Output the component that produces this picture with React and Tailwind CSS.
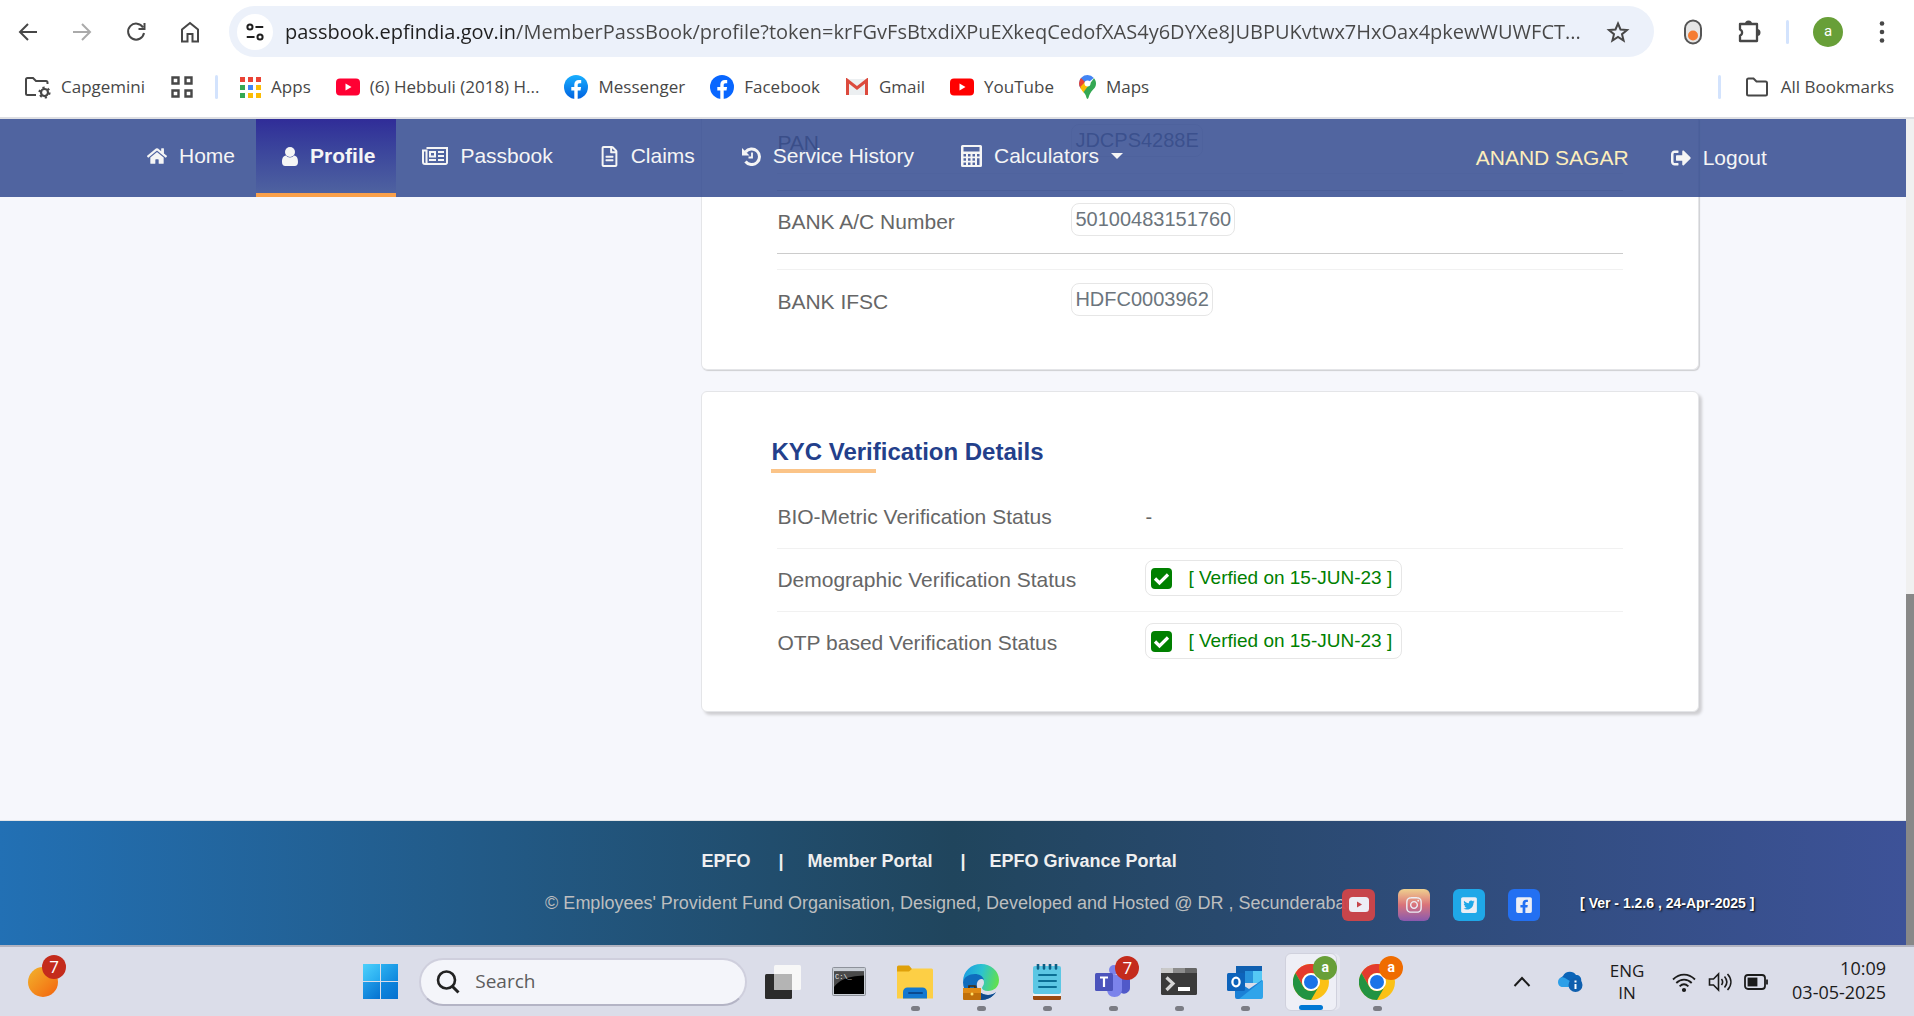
import { FaHome, FaRegFileAlt, FaSignOutAlt, FaInstagram, FaFacebookSquare, FaTwitterSquare } from "react-icons/fa";

const URL_TEXT =
  "passbook.epfindia.gov.in/MemberPassBook/profile?token=krFGvFsBtxdiXPuEXkeqCedofXAS4y6DYXe8JUBPUKvtwx7HxOax4pkewWUWFCT...";

/* ---------- browser toolbar icons ---------- */
function Line({ d, className = "size-6", w = 2, children }) {
  return (
    <svg viewBox="0 0 24 24" className={className} fill="none" stroke="currentColor" strokeWidth={w} aria-hidden="true">
      <path d={d} />
      {children}
    </svg>
  );
}
const YouTubeMark = ({ color }) => (
  <svg viewBox="0 0 24 18" className="w-6 h-[18px]" aria-hidden="true">
    <rect width="24" height="17" y="0.5" rx="4" fill={color} />
    <path d="M9.500 5.500v7l6-3.500z" fill="#fff" />
  </svg>
);
const FacebookMark = ({ from, to, id }) => (
  <svg viewBox="0 0 24 24" className="size-6" aria-hidden="true">
    <defs>
      <linearGradient id={id} x1="0" y1="0" x2="0" y2="1">
        <stop offset="0" stopColor={from} />
        <stop offset="1" stopColor={to} />
      </linearGradient>
    </defs>
    <circle cx="12" cy="12" r="12" fill={`url(#${id})`} />
    <path d="M10.300 24v-8.400H7.300V12h3V9.700c0-3.200 1.700-4.800 4.600-4.800.9 0 1.800.1 2.300.2v3.200h-1.600c-1.500 0-1.900.8-1.900 1.900V12h3.400l-.6 3.600h-2.800V24z" fill="#fff" />
  </svg>
);
const AppsMark = () => {
  const c = ["#ea4335", "#ea4335", "#ea4335", "#34a853", "#4285f4", "#fbbc04", "#34a853", "#fbbc04", "#fbbc04"];
  return (
    <svg viewBox="0 0 21 21" className="size-[21px]" aria-hidden="true">
      {c.map((f, i) => (
        <rect key={i} x={(i % 3) * 8} y={Math.floor(i / 3) * 8} width="5" height="5" fill={f} />
      ))}
    </svg>
  );
};
const GmailMark = () => (
  <svg viewBox="0 0 24 18" className="w-6 h-[18px]" aria-hidden="true">
    <rect x="1" y="1" width="22" height="16" rx="1.500" fill="#eceff1" />
    <path d="M2.500 17V2.500L12 10l9.500-7.500V17" fill="none" stroke="#dc4a3d" strokeWidth="3" />
  </svg>
);
const MapsMark = () => (
  <svg viewBox="0 0 17 24" className="w-[17px] h-6" aria-hidden="true">
    <path d="M8.500 0A8.500 8.500 0 0 0 0 8.500c0 2 .7 3.500 1.800 5L14.800 3A8.400 8.400 0 0 0 8.500 0z" fill="#4285f4" />
    <path d="M2 3 6 7 1.800 13.500A8.300 8.300 0 0 1 2 3z" fill="#ea4335" />
    <path d="M1.200 12 6 7l5 3.500-6.500 7.200C3.200 15.700 1.900 14.200 1.200 12z" fill="#fbbc04" />
    <path d="M15 3.200c1.300 1.500 2 3.300 2 5.300 0 5-4.200 6-6.600 11.500-.6 1.300-.9 4-1.900 4s-1.300-2.700-1.900-4l-2-2.900z" fill="#34a853" />
    <circle cx="8.500" cy="8.500" r="3" fill="#fff" />
  </svg>
);
const FolderGear = () => (
  <svg viewBox="0 0 27 24" className="w-[27px] h-6 text-[#474747]" fill="none" stroke="currentColor" strokeWidth="2" aria-hidden="true">
    <path d="M12 20H3.500A1.500 1.500 0 0 1 2 18.500v-14A1.500 1.500 0 0 1 3.500 3H9l3 3h10a1.500 1.500 0 0 1 1.500 1.500V9" />
    <circle cx="20.500" cy="17.500" r="3.500" strokeWidth="2.200" />
    <circle cx="20.500" cy="17.500" r="5" strokeWidth="2.200" strokeDasharray="2.200 3.030" />
  </svg>
);

const bookmarks = [
  { label: "Apps", icon: <AppsMark /> },
  { label: "(6) Hebbuli (2018) H...", icon: <YouTubeMark color="#ff0033" /> },
  { label: "Messenger", icon: <FacebookMark id="fbm" from="#19afff" to="#0062e0" /> },
  { label: "Facebook", icon: <FacebookMark id="fbf" from="#0866ff" to="#0866ff" /> },
  { label: "Gmail", icon: <GmailMark /> },
  { label: "YouTube", icon: <YouTubeMark color="#ff0000" /> },
  { label: "Maps", icon: <MapsMark /> },
];

function BrowserBar() {
  return (
    <header className="shrink-0 border-b-2 border-[#dedfe3] bg-white pb-[18px] text-[#474747]">
      <div className="flex items-center pt-[6px] pr-5 pl-4">
        <div className="flex items-center gap-[30px]">
          <button aria-label="Back"><Line d="M21 12H4M12 4l-8 8 8 8" /></button>
          <button aria-label="Forward" className="text-[#aaa]"><Line d="M3 12h17M12 4l8 8-8 8" /></button>
          <button aria-label="Reload"><Line d="M19 7.500A8 8 0 1 0 20 13M20.500 3v6h-6" /></button>
          <button aria-label="Home"><Line d="M4 21.500V9.500L12 3l8 6.500v12h-5.500V14h-5v7.500z" /></button>
        </div>
        <div className="ml-[27px] flex h-[51px] flex-1 items-center rounded-full bg-[#ecf1fa] pr-6 pl-2">
          <button aria-label="View site information" className="flex size-9 items-center justify-center rounded-full bg-white text-[#1f1f1f]">
            <Line d="M12.500 6.500H21M3 17.500h8.500" w={2.2} className="size-[22px]">
              <circle cx="6.500" cy="6.500" r="2.800" />
              <circle cx="17.500" cy="17.500" r="2.800" />
            </Line>
          </button>
          <input
            aria-label="Address"
            readOnly
            defaultValue={URL_TEXT}
            className="ml-3 min-w-0 flex-1 bg-transparent bg-linear-to-r from-[#1f1f1f] from-[229px] to-[#474747] to-[229px] bg-clip-text font-['Open_Sans',sans-serif] text-[20px] text-transparent outline-none"
          />
          <button aria-label="Bookmark this tab">
            <Line d="m12 3.500 2.500 6 6.500.5-5 4.200 1.600 6.300L12 17l-5.600 3.500L8 14.200 3 10l6.500-.5z" />
          </button>
        </div>
        <div className="flex items-center">
          <button aria-label="Capsule extension" className="ml-[29px]">
            <svg viewBox="0 0 20 26" className="h-[26px] w-5" aria-hidden="true">
              <rect x="2" y="1.500" width="16" height="23" rx="8" fill="#e6e6e6" stroke="#555" strokeWidth="2" />
              <circle cx="10" cy="16.500" r="5" fill="#f57c32" />
            </svg>
          </button>
          <button aria-label="Extensions" className="ml-[33px]">
            <svg viewBox="0 0 26 26" className="size-[26px]" aria-hidden="true">
              <path d="M4 5h17v17H4v-5.500a3.200 3.200 0 0 0 0-6z" fill="none" stroke="currentColor" strokeWidth="2.300" strokeLinejoin="round" />
              <path d="M9 5a3.500 3.500 0 0 1 7 0zM21 10a3.500 3.500 0 0 1 0 7z" fill="currentColor" />
            </svg>
          </button>
          <span className="ml-6 h-6 w-[3px] rounded bg-[#d3e3fd]" />
          <button aria-label="Account" className="ml-6 flex size-[30px] items-center justify-center rounded-full bg-[#689f38] font-[Roboto,sans-serif] text-[15px] text-white">a</button>
          <button aria-label="Menu" className="ml-[27px]">
            <svg viewBox="0 0 24 24" className="size-6" fill="currentColor" aria-hidden="true">
              <circle cx="12" cy="3.500" r="2.300" /><circle cx="12" cy="12" r="2.300" /><circle cx="12" cy="20.500" r="2.300" />
            </svg>
          </button>
        </div>
      </div>
      <nav aria-label="Bookmarks" className="mt-[18px] flex h-6 items-center pr-5 pl-6 font-['Open_Sans',sans-serif] text-[17px] whitespace-nowrap">
        <a href="#" className="flex items-center gap-[10px]"><FolderGear />Capgemini</a>
        <button aria-label="Tab groups" className="ml-[25px]">
          <Line d="M2.500 2.500h6v6h-6zM15.500 2.500h6v6h-6zM2.500 15.500h6v6h-6zM15.500 15.500h6v6h-6z" w={2.4} />
        </button>
        <span className="mr-[22px] ml-[21px] h-6 w-[3px] rounded bg-[#d3e3fd]" />
        <div className="flex items-center gap-[25px]">
          {bookmarks.map((b) => (
            <a key={b.label} href="#" className="flex items-center gap-[10px]">{b.icon}{b.label}</a>
          ))}
        </div>
        <span className="mr-6 ml-auto h-6 w-[3px] rounded bg-[#d3e3fd]" />
        <button className="flex items-center gap-3">
          <Line d="M2 19V5a1.500 1.500 0 0 1 1.500-1.500H8.500l3 3h9A1.500 1.500 0 0 1 22 8v11a1.500 1.500 0 0 1-1.500 1.500h-17A1.500 1.500 0 0 1 2 19z" />
          All Bookmarks
        </button>
      </nav>
    </header>
  );
}

/* ---------- portal ---------- */
const UserIcon = () => (
  <svg viewBox="0 0 16 19" className="h-[19px] w-4" fill="currentColor" aria-hidden="true">
    <circle cx="8" cy="5" r="5" />
    <path d="M4 8.500c1 1.300 2.300 2 4 2s3-.7 4-2c3 .4 4 3 4 6.500 0 2.500-1.200 4-3.200 4H3.200C1.200 19 0 17.500 0 15c0-3.500 1-6.100 4-6.500z" />
  </svg>
);
const NewsIcon = () => (
  <svg viewBox="0 0 26 18" className="h-[18px] w-[26px]" fill="none" stroke="currentColor" strokeWidth="2" aria-hidden="true">
    <path d="M4.500 1H25v14.500a1.500 1.500 0 0 1-1.500 1.500H3A2 2 0 0 1 1 15V3.500h3.500V15a1.500 1.500 0 0 1-1.500 2" />
    <path d="M8 5h5v4.500H8zM7 13h7M16 5h6M16 9h6M16 13h6" />
  </svg>
);
const HistoryIcon = () => (
  <svg viewBox="0 0 19 19" className="size-[19px]" fill="none" stroke="currentColor" aria-hidden="true">
    <path d="M3.500 5A7.800 7.800 0 1 1 3.500 14.500" strokeWidth="3" />
    <path d="M0 1v7.500h7.500z" fill="currentColor" stroke="none" />
    <path d="M10 5.500v5H6.500" strokeWidth="1.800" />
  </svg>
);
const CheckIcon = () => (
  <svg viewBox="0 0 21 21" className="size-[21px]" aria-hidden="true">
    <rect width="21" height="21" rx="4" fill="green" />
    <path d="m4 10.500 4.500 4.500L17 6.500" fill="none" stroke="#fff" strokeWidth="3.200" />
  </svg>
);
const CalcIcon = () => (
  <svg viewBox="0 0 21 22" className="h-[22px] w-[21px]" aria-hidden="true">
    <path fillRule="evenodd" fill="currentColor" d="M1.500 0h18A1.500 1.500 0 0 1 21 1.500v19a1.500 1.500 0 0 1-1.500 1.500h-18A1.500 1.500 0 0 1 0 20.500v-19A1.500 1.500 0 0 1 1.500 0zM2.500 2v4.500h16V2zM2.500 9v2.500H5V9zM7 9v2.500h2.500V9zM11.500 9v2.500H14V9zM16 9v2.500h2.500V9zM2.500 13.200v2.500H5v-2.500zM7 13.200v2.500h2.500v-2.500zM11.500 13.200v2.500H14v-2.500zM2.500 17.500V20H5v-2.500zM7 17.500V20h2.500v-2.500zM11.500 17.500V20H14v-2.500zM16 13.200V20h2.500v-6.800z" />
  </svg>
);

const tabs = [
  { label: "Home", icon: <FaHome className="size-5" /> },
  { label: "Profile", icon: <UserIcon />, active: true },
  { label: "Passbook", icon: <NewsIcon /> },
  { label: "Claims", icon: <FaRegFileAlt className="h-[21px] w-[19px]" /> },
  { label: "Service History", icon: <HistoryIcon /> },
  { label: "Calculators", icon: <CalcIcon />, menu: true },
];

function PortalNav() {
  return (
    <nav aria-label="Main" className="absolute inset-x-0 top-0 flex h-[78px] bg-[#334a8f]/85 pr-[7.3%] pl-[6.350%] text-[21px] whitespace-nowrap text-[#f5f5f5]">
      {tabs.map((t) => (
        <a
          key={t.label}
          href="#"
          className={
            "flex items-center gap-3 border-b-4 pr-[21px] pl-[26px] " +
            (t.active
              ? "border-[#faa049] bg-linear-to-b from-[#302c98] to-[#4f62a0] font-bold"
              : "border-transparent")
          }
        >
          {t.icon}
          {t.label}
          {t.menu && <span className="border-x-[6px] border-t-[6px] border-x-transparent border-t-current" />}
        </a>
      ))}
      <span className="ml-auto flex items-center text-[#fdeebb]">ANAND SAGAR</span>
      <a href="#" className="ml-[42px] flex items-center gap-3">
        <FaSignOutAlt className="size-5" />
        Logout
      </a>
    </nav>
  );
}

const pill = "rounded-lg border border-[#e6e6e6]";
const idRow = "flex items-center";
const idLabel = "mt-1 w-[294px] text-[21px] leading-6";
const idValue = "px-[3px] text-[20px] leading-[31px] text-[#6c757d] " + pill;

function KycStatus({ label, date }) {
  return (
    <div className="flex h-[63px] items-center border-t border-[#f1f1f1]">
      <dt className="w-[368px] text-[21px] leading-6">{label}</dt>
      <dd className={"mb-1 flex h-9 items-center gap-4 pr-[9px] pl-[5px] text-[19px] leading-[34px] text-[green] " + pill}>
        <CheckIcon />
        <span>{date}</span>
      </dd>
    </div>
  );
}

function Cards() {
  return (
    <main className="mr-[10.850%] ml-[36.800%] flex-1 text-[#666]">
      <section aria-label="Bank details" className="rounded-b-md border border-t-0 border-[#e4e5e8] bg-white pr-[75px] pb-[53px] pl-[75px] shadow-[1px_1px_1px_#cfcfd2]">
        <dl>
          <div className={idRow + " border-b border-[#f1f1f1] pt-[5px] pb-4"}>
            <dt className={idLabel}>PAN</dt>
            <dd className={idValue}>JDCPS4288E</dd>
          </div>
          <div className={idRow + " mt-4 border-t border-[#ccc] pt-3 pb-[17px]"}>
            <dt className={idLabel}>BANK A/C Number</dt>
            <dd className={idValue}>50100483151760</dd>
          </div>
          <div className="border-t border-[#ccc] pt-[15px]">
            <div className={idRow + " border-t border-[#f1f1f1] pt-[13px]"}>
              <dt className={idLabel}>BANK IFSC</dt>
              <dd className={idValue}>HDFC0003962</dd>
            </div>
          </div>
        </dl>
      </section>
      <section className="mt-[21px] rounded-md border border-[#e4e5e8] bg-white px-[75px] pt-[43px] pb-[37px] shadow-[3px_3px_3px_#cfcfd2]">
        <h2 className="-ml-[6px] text-[24px] leading-[33px] font-bold text-[#233f8b]">
          KYC Verification Details
          <span className="mt-px block h-1 w-[105px] bg-[#fbc488]" />
        </h2>
        <dl className="mt-3">
          <div className="flex h-[63px] items-center">
            <dt className="w-[368px] text-[21px] leading-6">BIO-Metric Verification Status</dt>
            <dd className="text-[20px] leading-6">-</dd>
          </div>
          <KycStatus label="Demographic Verification Status" date="[ Verfied on 15-JUN-23 ]" />
          <KycStatus label="OTP based Verification Status" date="[ Verfied on 15-JUN-23 ]" />
        </dl>
      </section>
    </main>
  );
}

const social = "flex h-8 items-center justify-center rounded-md";
function PortalFooter() {
  return (
    <footer className="shrink-0 border-t border-[#e3e5e8] bg-linear-to-r from-[#2270b4] via-[#20455d] to-[#3d5298] pt-7 pb-6 text-[18px]">
      <div className="ml-[36.800%] flex items-center leading-6 font-bold text-[#efefef]">
        <a href="#">EPFO</a>
        <span className="mr-6 ml-7">|</span>
        <a href="#">Member Portal</a>
        <span className="mr-6 ml-7">|</span>
        <a href="#">EPFO Grivance Portal</a>
      </div>
      <div className="mt-4 flex h-8 items-center pl-[28.600%]">
        <p className="mb-1 w-[797px] leading-6 whitespace-nowrap text-[#bdbebf]">
          © Employees' Provident Fund Organisation, Designed, Developed and Hosted @ DR , Secunderabad
        </p>
        <div className="relative flex items-center gap-[23px] text-[#eceef5]">
          <a href="#" aria-label="YouTube" className={social + " w-[33px] bg-[#d04549]/95"}>
            <svg viewBox="0 0 20 16" className="h-4 w-5" aria-hidden="true">
              <rect width="20" height="15" rx="3.500" fill="currentColor" />
              <path d="M8 4.500v6l5-3z" fill="#c5454a" />
            </svg>
          </a>
          <a href="#" aria-label="Instagram" className={social + " w-8 bg-linear-to-b from-[#eed08e] via-[#d9727a] to-[#8a58ad]"}><FaInstagram className="size-[18px]" /></a>
          <a href="#" aria-label="Twitter" className={social + " w-8 bg-[#1fa8e8]"}><FaTwitterSquare className="size-[18px]" /></a>
          <a href="#" aria-label="Facebook" className={social + " w-8 bg-[#2370f2]"}><FaFacebookSquare className="size-[18px]" /></a>
        </div>
        <span className="mb-1 ml-10 text-[14px] font-bold whitespace-nowrap text-white text-shadow-[1px_1px_2px_#000]">[ Ver - 1.2.6 , 24-Apr-2025 ]</span>
      </div>
    </footer>
  );
}

/* ---------- taskbar ---------- */
const TaskView = () => (
  <svg viewBox="0 0 36 36" className="size-9" aria-hidden="true">
    <rect x="0" y="10" width="27" height="25" rx="1.500" fill="#2b2b2b" />
    <rect x="9" y="1" width="27" height="25" rx="1.500" fill="#f7f7f7" />
    <path d="M9 10h18v16H10.500A1.500 1.500 0 0 1 9 24.500z" fill="#b4b4b4" />
  </svg>
);
const Cmd = () => (
  <svg viewBox="0 0 34 30" className="h-[30px] w-[34px]" aria-hidden="true">
    <rect x="0.500" y="0.500" width="33" height="28" rx="1" fill="#c9ced6" stroke="#8e929b" />
    <rect x="2" y="4.500" width="30" height="22.500" fill="#000" />
    <path d="M2 4.500h30v4C14 9 7 14 2 20z" fill="#4a4a4a" />
    <text x="3" y="12" fontSize="7" fontFamily="Liberation Mono, monospace" fill="#eee">C:\_</text>
  </svg>
);
const Explorer = () => (
  <svg viewBox="0 0 36 34" className="h-[34px] w-9" aria-hidden="true">
    <path d="M0 2a1.500 1.500 0 0 1 1.500-1.500H12L15 4v5H0z" fill="#dfa00a" />
    <path d="M0 6.500h12L15.500 3.500h19A1.500 1.500 0 0 1 36 5v28.500H0z" fill="#fdcf45" />
    <path d="M6 33.500V27a4.500 4.500 0 0 1 4.500-4.500h15A4.500 4.500 0 0 1 30 27v6.500z" fill="#1478cf" />
    <path d="M12 28h13" stroke="#0b4a8f" strokeWidth="2" strokeLinecap="round" />
  </svg>
);
const Edge = () => (
  <svg viewBox="0 0 36 36" className="size-9" aria-hidden="true">
    <defs>
      <linearGradient id="edgeTop" x1="0" y1="0.300" x2="1" y2="0.500">
        <stop offset="0" stopColor="#1b9de2" /><stop offset="0.500" stopColor="#2cc3cf" /><stop offset="1" stopColor="#62e04e" />
      </linearGradient>
    </defs>
    <path d="M0 18C0 7 8 0 18 0s18 7 18 16c0 7-5 11-11 11-4 0-6-1.500-6-3s2-2.500 2-5.500C21 14 17 11 12 11 6 11 1 15 0 18z" fill="url(#edgeTop)" />
    <path d="M0 18c1-5 6-8 12-8 4 0 8 2 9 6-2-2-6-1-7 3-2 7 4 12 11 12 4 0 7-2 8-3-3 5-9 8-15 8C8 36 0 28 0 18z" fill="#0f6cbd" />
    <path d="M14 20c-1 7 5 11 11 11 4 0 7-2 8-3-3 5-9 8-15 8-5-3-7-10-4-16z" fill="#114a8b" />
    <rect x="0" y="24" width="18" height="12" rx="1" fill="#c06f0a" />
    <path d="M0 25a1 1 0 0 1 1-1h16a1 1 0 0 1 1 1v4H0z" fill="#e08a14" />
    <path d="M6 24v-2h6v2" fill="none" stroke="#4b2c08" strokeWidth="1.600" />
    <circle cx="9" cy="30" r="1.500" fill="#ffe06a" />
  </svg>
);
const Notepad = () => (
  <svg viewBox="0 0 28 36" className="h-9 w-7" aria-hidden="true">
    <rect x="0" y="30" width="28" height="6" rx="1.500" fill="#9a4a10" />
    <rect x="0" y="29" width="28" height="3" fill="#f3f3f3" />
    <rect x="0" y="2" width="28" height="28" rx="2" fill="#5cc7e4" />
    <path d="M5 0.500v4M11 0.500v4M17 0.500v4M23 0.500v4" stroke="#0c5f85" strokeWidth="2.600" strokeLinecap="round" />
    <path d="M6 11h17M6 17h17M6 23h17" stroke="#0b6f95" strokeWidth="2" strokeLinecap="round" />
  </svg>
);
const Teams = () => (
  <svg viewBox="0 0 36 36" className="size-9" aria-hidden="true">
    <circle cx="19" cy="6" r="5" fill="#7b83eb" />
    <path d="M25 12h10v11a6 6 0 0 1-10 5z" fill="#5059c9" />
    <path d="M12 11h15v14c0 5-3 8-7.500 8S12 30 12 25z" fill="#7b83eb" />
    <rect x="0" y="9" width="18" height="18" rx="1.500" fill="#4b53bc" />
    <path d="M5 13.500h8M9 13.500V23" stroke="#fff" strokeWidth="2.200" />
  </svg>
);
const Terminal = () => (
  <svg viewBox="0 0 36 34" className="h-[34px] w-9" aria-hidden="true">
    <path d="M0 4.500A1.500 1.500 0 0 1 1.500 3h33A1.500 1.500 0 0 1 36 4.500v4H0z" fill="#8d8d8d" />
    <path d="M0 8V4.500A1.500 1.500 0 0 1 1.500 3H12v5z" fill="#c9c9c9" />
    <path d="M24 3h10.500A1.500 1.500 0 0 1 36 4.500V8H24z" fill="#666" />
    <path d="M0 8h36v20.500a1.500 1.500 0 0 1-1.500 1.500h-33A1.500 1.500 0 0 1 0 28.500z" fill="#3a3a3a" />
    <path d="m5.500 12.500 6.500 6-6.500 6.500" fill="none" stroke="#d5d5d5" strokeWidth="3.200" />
    <rect x="17" y="22" width="12" height="4" fill="#fff" />
  </svg>
);
const Outlook = () => (
  <svg viewBox="0 0 36 34" className="h-[34px] w-9" aria-hidden="true">
    <path d="M9 1h26v17H9z" fill="#0f5fb0" />
    <path d="M18 6h8v12h-8z" fill="#2893dd" /><path d="M26 6h9v12h-9z" fill="#55c8f5" />
    <path d="m8 15 14 9 13-9v17a2 2 0 0 1-2 2H10a2 2 0 0 1-2-2z" fill="#1a80d6" />
    <path d="m36 15-24 19h22a2 2 0 0 0 2-2z" fill="#2fa4ea" />
    <rect x="0" y="8" width="18" height="18" rx="1.500" fill="#0d63bb" />
    <ellipse cx="9" cy="17" rx="3.600" ry="4.300" fill="none" stroke="#fff" strokeWidth="2.300" />
  </svg>
);
const Chrome = () => (
  <svg viewBox="0 0 36 36" className="size-9" aria-hidden="true">
    <circle cx="18" cy="18" r="18" fill="#fbc116" />
    <path d="M2.400 9A18 18 0 0 1 33.600 9H18a9 9 0 0 0-7.800 13.500z" fill="#e33b2e" />
    <path d="M2.400 9A18 18 0 0 0 18 36l7.800-13.500a9 9 0 0 1-15.600 0z" fill="#229342" />
    <circle cx="18" cy="18" r="9" fill="#fff" />
    <circle cx="18" cy="18" r="7" fill="#1a73e8" />
  </svg>
);

const redBadge = "absolute flex size-6 items-center justify-center rounded-full bg-[#c42b1c] text-[17px] leading-6 text-white";
const profileBadge = "absolute -top-2 -right-2 flex size-6 items-center justify-center rounded-full font-[Roboto,sans-serif] text-[14px] font-bold text-white ";

const apps = [
  { name: "Task view", icon: <TaskView /> },
  { name: "Command Prompt", icon: <Cmd /> },
  { name: "File Explorer", icon: <Explorer />, running: true },
  { name: "Edge", icon: <Edge />, running: true },
  { name: "Notepad", icon: <Notepad />, running: true },
  { name: "Teams", icon: <Teams />, running: true, badge: <span className={redBadge + " -top-2 -right-2"}>7</span> },
  { name: "Terminal", icon: <Terminal />, running: true },
  { name: "Outlook", icon: <Outlook />, running: true },
  { name: "Chrome, work profile", icon: <Chrome />, active: true, badge: <span className={profileBadge + "bg-[#689f38]"}>a</span> },
  { name: "Chrome, personal profile", icon: <Chrome />, running: true, badge: <span className={profileBadge + "bg-[#ef6c00]"}>a</span> },
];

function Taskbar() {
  return (
    <footer className="flex h-[71px] shrink-0 items-center border-t-2 border-[#b2b3c0] bg-[#dbdde9] pr-7 pl-7 font-['Open_Sans',sans-serif] text-[#1b1b1b]">
      <button aria-label="Widgets" className="relative size-[30px] rounded-full bg-linear-to-br from-[#f0b32c] to-[#f2600c]">
        <span className={redBadge + " -top-3 -right-2"}>7</span>
      </button>
      <div className="flex-[20]" />
      <button aria-label="Start" className="grid size-[35px] grid-cols-2 gap-px">
        <span className="bg-linear-to-br from-[#4cd0fb] to-[#22a8ee]" />
        <span className="bg-linear-to-br from-[#2bb0f0] to-[#0c86dd]" />
        <span className="bg-linear-to-br from-[#22a0ea] to-[#0672d0]" />
        <span className="bg-linear-to-br from-[#0f8be0] to-[#0670cf]" />
      </button>
      <label className="ml-[21px] flex h-12 w-[328px] items-center gap-[15px] rounded-full border-2 border-b-[#b4b4c5] border-[#cfcfdd] bg-[#f4f5fa] pl-[15px]">
        <svg viewBox="0 0 24 24" className="size-6 shrink-0" fill="none" stroke="#222" strokeWidth="2.600" aria-hidden="true">
          <circle cx="10.500" cy="10" r="8.500" /><path d="m16.500 16.500 6 6" strokeWidth="3" />
        </svg>
        <input type="search" placeholder="Search" aria-label="Search" className="min-w-0 flex-1 bg-transparent text-[19px] outline-none placeholder:text-[#5c5c5c]" />
      </label>
      <ul className="ml-[10px] flex items-center gap-[14px]">
        {apps.map((a) => (
          <li key={a.name}>
            <button
              aria-label={a.name}
              className={
                "relative flex h-[58px] w-[52px] items-center justify-center rounded-md " +
                (a.active ? "border border-[#d0d1dd] bg-[#eeeff6] shadow-[4px_0_0_-1px_#e6e7f0]" : "")
              }
            >
              <span className="relative">
                {a.icon}
                {a.badge}
              </span>
              {a.running && <span className="absolute bottom-0 h-[5px] w-[9px] rounded-full bg-[#7b7c84]" />}
              {a.active && <span className="absolute bottom-0 h-[5px] w-6 rounded-full bg-[#0078d4]" />}
            </button>
          </li>
        ))}
      </ul>
      <div className="flex-[7]" />
      <div className="flex items-center text-center text-[18px] leading-6">
        <button aria-label="Show hidden icons"><Line d="m4.500 16 7.500-8 7.500 8" /></button>
        <button aria-label="OneDrive" className="ml-6">
          <svg viewBox="0 0 25 21" className="h-[21px] w-[25px]" aria-hidden="true">
            <path d="M5 14a5 5 0 0 1 0-9C7 0 15-1 18 4c4 0 6 3 5 7l-4 3z" fill="#0a64b8" />
            <path d="M0 11c0-4 4-6 7-4l8 5-2 4H5c-3 0-5-2-5-5z" fill="#2c9fe8" />
            <circle cx="17.500" cy="14" r="7" fill="#0f5fae" />
            <path d="M17.500 13v5M17.500 9.500v2" stroke="#fff" strokeWidth="2" />
          </svg>
        </button>
        <button className="ml-6 w-10 text-[17px] leading-[22px]">ENG<br />IN</button>
        <button aria-label="Network, volume and battery" className="ml-[25px] flex items-center gap-3">
          <Line d="M1 9.500c6.500-6.500 15.500-6.500 22 0M4.300 13c4.500-4.500 11-4.500 15.400 0M7.600 16.300c2.700-2.600 6-2.600 8.800 0" w={1.8}>
            <circle cx="12" cy="20" r="1.200" fill="currentColor" />
          </Line>
          <Line d="M1.500 9v6h4l5 5V4l-5 5zM13.500 9c1.500 2 1.500 4 0 6M16.500 6.500c3 3.500 3 7.500 0 11M19.500 4c4.500 5 4.500 11 0 16" w={1.6} />
          <Line d="M4 5h14a3 3 0 0 1 3 3v8a3 3 0 0 1-3 3H4a3 3 0 0 1-3-3V8a3 3 0 0 1 3-3z" w={1.8}>
            <rect x="4.500" y="8.500" width="8" height="7" fill="currentColor" />
            <path d="M23 9.500v5" />
          </Line>
        </button>
        <button className="ml-6 pb-[3px] text-right">10:09<br />03-05-2025</button>
      </div>
    </footer>
  );
}

export default function App() {
  return (
    <div className="flex h-screen flex-col overflow-hidden font-['Liberation_Sans',Arial,sans-serif]">
      <BrowserBar />
      <div className="flex min-h-0 flex-1">
        <div className="relative flex min-w-0 flex-1 flex-col overflow-hidden bg-[#f6f7fc]">
          <Cards />
          <PortalFooter />
          <PortalNav />
        </div>
        <div className="flex w-2 shrink-0 flex-col justify-end bg-[#f0f0f0]">
          <div className="h-[42.500%] bg-[#888]" />
        </div>
      </div>
      <Taskbar />
    </div>
  );
}
